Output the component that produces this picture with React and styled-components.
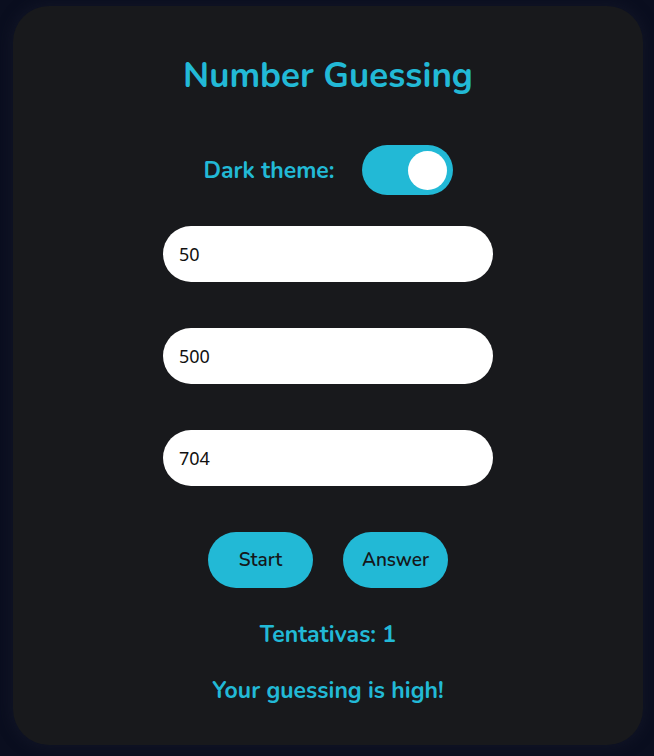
import React, { useState } from 'react';
import styled, { createGlobalStyle } from 'styled-components';

const GlobalStyle = createGlobalStyle`
  html, body {
    margin: 0;
    padding: 0;
    background-color: #0a0e1f;
  }
  body {
    font-family: Nunito, Lato, "Noto Sans", sans-serif;
  }
`;

const Page = styled.div`
  width: 654px;
  height: 756px;
  box-sizing: border-box;
  padding: 6px 11px 11px 13px;
  display: flex;
`;

const Card = styled.main`
  flex: 1;
  background-color: #18191c;
  border-radius: 36px;
  box-shadow: 0 0 12px 4px rgba(20, 24, 40, 0.6);
  display: flex;
  flex-direction: column;
  align-items: center;
  padding-top: 48px;
  box-sizing: border-box;
`;

const Title = styled.h1`
  margin: 0;
  color: #22b9d6;
  font-size: 35px;
  font-weight: 700;
  line-height: 44px;
`;

const ThemeRow = styled.div`
  display: flex;
  align-items: center;
  gap: 27px;
  margin-top: 47px;
`;

const Label = styled.span`
  color: #22b9d6;
  font-size: 23px;
  font-weight: 700;
`;

const Switch = styled.button`
  width: 91px;
  height: 50px;
  border-radius: 25px;
  border: none;
  padding: 0 6px;
  background-color: #22b9d6;
  display: flex;
  align-items: center;
  justify-content: ${(p) => (p.$on ? 'flex-end' : 'flex-start')};
  cursor: pointer;
  box-sizing: border-box;
`;

const Knob = styled.span`
  width: 39px;
  height: 39px;
  border-radius: 50%;
  background-color: #ffffff;
`;

const Fields = styled.div`
  display: flex;
  flex-direction: column;
  gap: 46px;
  margin-top: 31px;
`;

const Field = styled.input`
  width: 330px;
  height: 56px;
  box-sizing: border-box;
  border: none;
  border-radius: 28px;
  padding: 0 16px;
  background-color: #ffffff;
  color: #111111;
  font-family: "Noto Sans", "Open Sans", sans-serif;
  font-size: 18px;
  outline: none;
`;

const Actions = styled.div`
  display: flex;
  gap: 30px;
  margin-top: 46px;
`;

const Action = styled.button`
  width: 105px;
  height: 56px;
  border: none;
  border-radius: 28px;
  background-color: #22b9d6;
  color: #15171a;
  font-family: Nunito, Lato, "Noto Sans", sans-serif;
  font-size: 19px;
  font-weight: 600;
  cursor: pointer;
`;

const Info = styled.p`
  margin: ${(p) => p.$top}px 0 0;
  color: #22b9d6;
  font-size: 23px;
  font-weight: 700;
  line-height: 30px;
`;

export default function App() {
  const [dark, setDark] = useState(true);
  return (
    <>
      <GlobalStyle />
      <Page>
        <Card>
          <Title>Number Guessing</Title>
          <ThemeRow>
            <Label>Dark theme:</Label>
            <Switch $on={dark} onClick={() => setDark(!dark)} aria-label="Dark theme">
              <Knob />
            </Switch>
          </ThemeRow>
          <Fields>
            <Field defaultValue="50" />
            <Field defaultValue="500" />
            <Field defaultValue="704" />
          </Fields>
          <Actions>
            <Action>Start</Action>
            <Action>Answer</Action>
          </Actions>
          <Info $top={32}>Tentativas: 1</Info>
          <Info $top={26}>Your guessing is high!</Info>
        </Card>
      </Page>
    </>
  );
}
